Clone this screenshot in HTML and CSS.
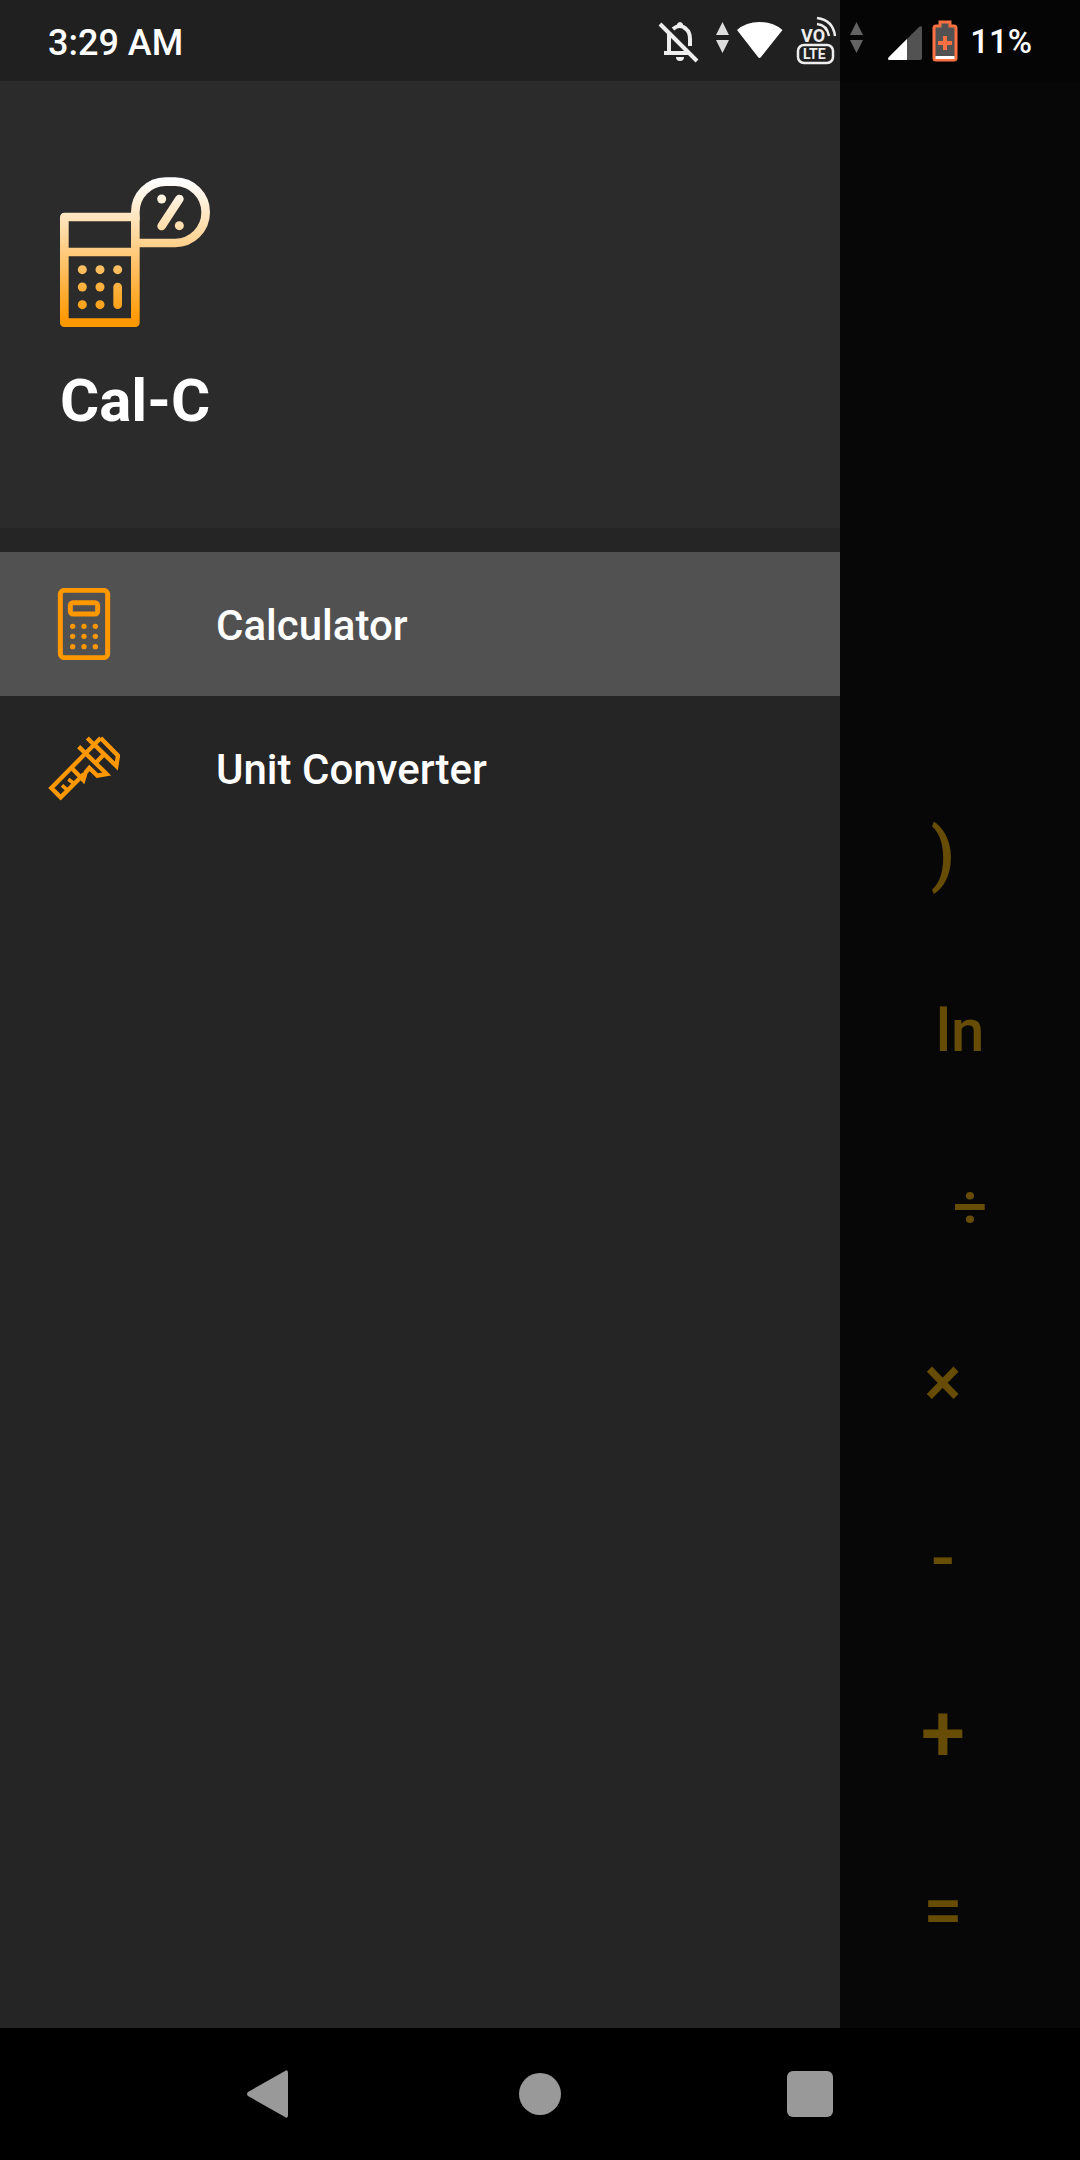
FILE: index.html
```html
<!DOCTYPE html>
<html lang="en">
<head>
<meta charset="utf-8">
<meta name="viewport" content="width=device-width, initial-scale=1">
<title>Cal-C</title>
<link rel="stylesheet" href="styles.css">
</head>
<body>
<div class="screen">
  <aside class="drawer">
    <header class="drawer-header">
      <svg class="logo" viewBox="60 50 450 450" fill="none" aria-hidden="true">
        <defs>
          <linearGradient id="amber" gradientUnits="userSpaceOnUse" x1="0" y1="50" x2="0" y2="500">
            <stop offset="0.03" stop-color="#fff"/>
            <stop offset="0.96" stop-color="#ff9800"/>
          </linearGradient>
        </defs>
        <g stroke="url(#amber)" stroke-width="26">
          <path stroke-linejoin="round" d="M286 170H73V487H286Z"/>
          <path d="M73 275H286"/>
          <path d="M286 180V156A91 91 0 0 1 377 64H405A92 92 0 0 1 405 248H286"/>
          <path stroke-linecap="round" d="M418 116L365 197M233 380V433"/>
        </g>
        <g fill="url(#amber)">
          <circle cx="365" cy="116" r="13.500"/><circle cx="418" cy="196" r="13.500"/>
          <circle cx="127" cy="328" r="13.500"/><circle cx="180" cy="328" r="13.500"/><circle cx="233" cy="328" r="13.500"/>
          <circle cx="127" cy="380" r="13.500"/><circle cx="180" cy="380" r="13.500"/>
          <circle cx="127" cy="433" r="13.500"/><circle cx="180" cy="433" r="13.500"/>
        </g>
      </svg>
      <h1 class="app-name">Cal-C</h1>
    </header>
    <nav class="menu" aria-label="Sections">
      <a class="menu-item menu-item-active" href="#calculator" aria-current="page">
        <svg class="menu-icon" viewBox="24 24 216 216" fill="none" stroke="#ff9800" stroke-width="15" aria-hidden="true">
          <rect x="61" y="31" width="142" height="202" rx="12"/>
          <rect x="91" y="68" width="82" height="34" rx="8"/>
          <g fill="#ff9800" stroke="none">
            <circle cx="98" cy="139" r="8"/><circle cx="132" cy="139" r="8"/><circle cx="166" cy="139" r="8"/>
            <circle cx="98" cy="169" r="8"/><circle cx="132" cy="169" r="8"/><circle cx="166" cy="169" r="8"/>
            <circle cx="98" cy="200" r="8"/><circle cx="132" cy="200" r="8"/><circle cx="166" cy="200" r="8"/>
          </g>
        </svg>
        <span>Calculator</span>
      </a>
      <a class="menu-item" href="#units">
        <svg class="menu-icon" viewBox="24 36 216 216" fill="none" stroke="#ff9800" stroke-width="13" aria-hidden="true">
          <path d="M182 54L34 204L62 232L132 162M182 54L234 107L229 138L163 74"/>
          <path d="M142 54L168 80M116 80L188 150L200 162L172 167L148 144L137 157L130 180L97 146M170 126L192 103"/>
          <path d="M84 212L66 196M104 192L85 178" stroke-width="11"/>
        </svg>
        <span>Unit Converter</span>
      </a>
    </nav>
  </aside>

  <main class="keypad">
    <button class="key key-paren" type="button">)</button>
    <button class="key key-middle" type="button">ln</button>
    <button class="key key-right" type="button">÷</button>
    <button class="key key-large" type="button">×</button>
    <button class="key key-large" type="button">-</button>
    <button class="key key-plus" type="button">+</button>
    <button class="key key-large" type="button">=</button>
  </main>

  <div class="status-bar">
    <time class="clock" datetime="03:29">3:29 AM</time>
    <div class="status-icons">
      <svg width="50" height="80" viewBox="0 0 50 80" fill="none" stroke="#eee" stroke-width="4" role="img" aria-label="Notifications off">
        <path d="M4 23L41 60"/>
        <path d="M13 33V51M8 52H32M17 28Q24 22 30 28Q34 31 34 38V45"/>
        <path d="M20 56H28Q28 60 24 60Q20 60 20 56ZM21 26V23Q24 19 27 23V26Z" fill="#eee" stroke="none"/>
      </svg>
      <svg width="16" height="80" viewBox="0 0 16 80" fill="#ddd" aria-hidden="true"><path d="M2 34L8.500 21L15 34ZM2 39H15L8.500 52Z"/></svg>
      <svg class="wifi" width="44" height="80" viewBox="0 0 44 80" fill="#fff" role="img" aria-label="Wi-Fi"><path d="M-1 29Q8 21 21.500 21Q35 21 44.500 29L23 56Q21.500 58 20 56Z"/></svg>
      <svg width="50" height="80" viewBox="0 0 50 80" fill="none" stroke="#eee" stroke-width="2.500" role="img" aria-label="VoLTE">
        <rect x="8" y="44" width="35" height="18" rx="6"/>
        <path d="M27 17Q43 19 45 35M27 23Q37 24 39 35"/>
        <text class="volte volte-top" x="11" y="41">VO</text>
        <text class="volte volte-bottom" x="13" y="58">LTE</text>
      </svg>
      <svg width="16" height="80" viewBox="0 0 16 80" fill="#636363" aria-hidden="true"><path d="M2 34L8.500 21L15 34ZM2 39H15L8.500 52Z"/></svg>
      <svg width="52" height="80" viewBox="0 0 52 80" role="img" aria-label="Signal">
        <path fill="#525252" d="M17 59Q15 58 17 56L47 26Q50 24 50 27V57Q50 59 48 59Z"/>
        <path fill="#fff" d="M17 59Q15 58 17 56L35 38V59Z"/>
      </svg>
      <svg width="26" height="80" viewBox="0 0 26 80" role="img" aria-label="Battery charging">
        <path fill="#525252" stroke="#ff7043" stroke-width="3" d="M8 25V21H18V25H22Q24 25 24 27V57Q24 59 22 59H4Q2 59 2 57V27Q2 25 4 25Z"/>
        <path fill="#fff" d="M3.500 55H22.500V58H3.500Z"/>
        <path stroke="#ff7043" stroke-width="4" d="M6 42H20M13 35V49"/>
      </svg>
      <span class="battery-level">11%</span>
    </div>
  </div>

  <footer class="nav-bar">
    <button class="nav-button" type="button" aria-label="Back">
      <svg width="48" height="48" viewBox="0 0 48 48" fill="#999"><path d="M2 22L39 1Q42 -1 42 3V45Q42 49 39 47L2 26Q0 24 2 22Z"/></svg>
    </button>
    <button class="nav-button" type="button" aria-label="Home">
      <svg width="48" height="48" viewBox="0 0 48 48" fill="#999"><circle cx="24" cy="24" r="21"/></svg>
    </button>
    <button class="nav-button" type="button" aria-label="Recent apps">
      <svg width="48" height="48" viewBox="0 0 48 48" fill="#999"><rect x="1" y="1" width="46" height="46" rx="6"/></svg>
    </button>
  </footer>
</div>
</body>
</html>
```
FILE: styles.css
```css
* {
  box-sizing: border-box;
}

body {
  margin: 0;
  background: #000;
  color: #fff;
  font-family: Roboto, "Noto Sans", sans-serif;
}

button {
  border: 0;
  background: none;
  font: inherit;
  color: inherit;
}

svg {
  display: block;
  flex: none;
}

.screen {
  display: grid;
  grid-template-columns: 7fr 2fr;
  grid-template-rows: 81px 1fr 132px;
  min-height: 100vh;
}

/* The status bar shares the first row with the drawer and shades it. */
.status-bar {
  grid-area: 1 / 1 / 2 / 3;
  display: flex;
  align-items: center;
  justify-content: space-between;
  padding: 0 48px;
  background: rgba(0, 0, 0, 0.24);
  font-weight: 500;
}

.clock {
  font-size: 36px;
  line-height: 48px;
  padding-top: 4px;
}

.status-icons {
  display: flex;
  align-items: center;
  gap: 8px;
}

.wifi {
  overflow: visible;
}

.battery-level {
  margin-left: 4px;
  padding-top: 2px;
  font-size: 33px;
  line-height: 48px;
}

.volte {
  fill: #eee;
  stroke: none;
  font-weight: 700;
}

.volte-top {
  font-size: 18px;
}

.volte-bottom {
  font-size: 14px;
}

.drawer {
  grid-area: 1 / 1 / 3 / 2;
  background: #252525;
}

.drawer-header {
  padding: 177px 60px 91px;
  background: #2b2b2b;
}

.logo {
  width: 150px;
  height: 150px;
}

.app-name {
  margin: 38px 0 0;
  font-size: 60px;
  line-height: 72px;
  font-weight: 700;
}

.menu {
  padding-top: 24px;
}

.menu-item {
  display: flex;
  align-items: center;
  gap: 96px;
  height: 144px;
  padding: 0 48px;
  color: #fff;
  font-size: 42px;
  font-weight: 500;
  text-decoration: none;
}

.menu-item span {
  padding-top: 2px;
}

.menu-item-active {
  background: #515151;
}

.menu-icon {
  width: 72px;
  height: 72px;
}

.keypad {
  grid-area: 1 / 2 / 3 / 3;
  display: flex;
  flex-direction: column;
  justify-content: flex-end;
  padding-bottom: 30px;
  background: #070707;
  color: #664c05;
}

.key {
  height: 176px;
  padding: 0 34px 0 0;
  font-size: 60px;
  font-weight: 500;
}

.key-paren,
.key-large {
  font-size: 70px;
}

.key-middle {
  padding: 0;
}

.key-right {
  padding: 0 0 0 20px;
}

.key-plus {
  font-size: 80px;
}

.nav-bar {
  grid-area: 3 / 1 / 4 / 3;
  display: grid;
  grid-template-columns: repeat(3, 1fr);
  padding: 0 12.5%;
  background: #000;
}

.nav-button {
  display: flex;
  align-items: center;
  justify-content: center;
}
```
